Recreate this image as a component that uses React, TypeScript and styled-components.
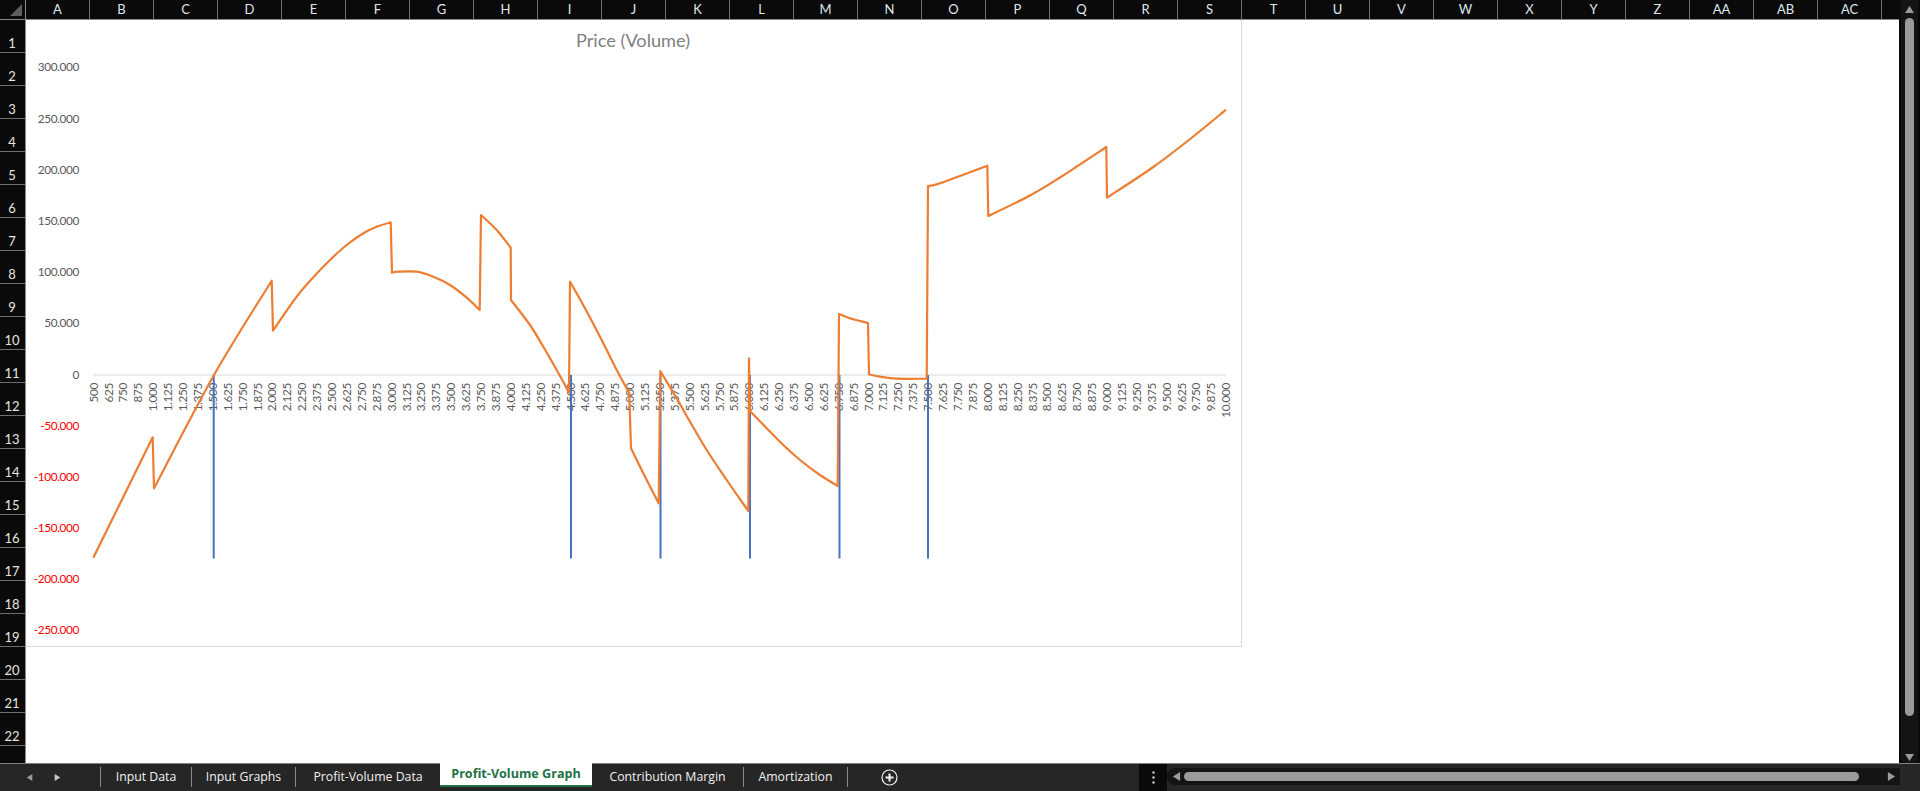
import React from "react";
import styled, { createGlobalStyle } from "styled-components";

const Global = createGlobalStyle`
  html, body { margin: 0; padding: 0; height: 100%; overflow: hidden; background: #0a0a0a; }
  #root { height: 100%; }
`;

const columnNames = ["A","B","C","D","E","F","G","H","I","J","K","L","M","N","O","P","Q","R","S","T","U","V","W","X","Y","Z","AA","AB","AC"];
const rowNames = Array.from({ length: 22 }, (_, i) => String(i + 1));

const Page = styled.div`
  width: 1920px;
  height: 791px;
  display: flex;
  flex-direction: column;
  overflow: hidden;
  font-family: Lato, "Liberation Sans", sans-serif;
`;
const SheetRow = styled.div`
  flex: 1;
  min-height: 0;
  display: flex;
`;
const Sheet = styled.div`
  width: 1899px;
  display: grid;
  grid-template-columns: 26px 1fr;
  grid-template-rows: 20px 1fr;
  background: #0a0a0a;
`;
const Corner = styled.div`
  border-right: 1px solid #8a8a8a;
  border-bottom: 1px solid #8a8a8a;
  display: flex;
  align-items: flex-start;
  justify-content: flex-end;
  padding: 4px 3px 0 0;
`;
const ColumnHeaders = styled.div`
  display: flex;
  border-bottom: 1px solid #8a8a8a;
`;
const ColumnHeader = styled.div`
  width: 64px;
  flex: none;
  box-sizing: border-box;
  border-right: 1px solid #6e6e6e;
  color: #dfe6ea;
  font-size: 13px;
  line-height: 19px;
  text-align: center;
`;
const RowHeaders = styled.div`
  display: flex;
  flex-direction: column;
  border-right: 1px solid #8a8a8a;
`;
const RowHeader = styled.div`
  height: 33px;
  flex: none;
  box-sizing: border-box;
  border-bottom: 1px solid #6e6e6e;
  color: #e6e6df;
  font-size: 13px;
  line-height: 17px;
  padding-top: 15px;
  text-align: center;
  padding-right: 1px;
`;
const Canvas = styled.div`
  background: #ffffff;
  min-width: 0;
`;
const ChartFrame = styled.div`
  width: 1216px;
  height: 627px;
  box-sizing: border-box;
  border-right: 1px solid #d9d9d9;
  border-bottom: 1px solid #d9d9d9;
`;
const ChartSvg = styled.svg`
  display: block;
  width: 1215px;
  height: 626px;
`;
const ChartTitle = styled.text`
  font-family: Lato, "Liberation Sans", sans-serif;
  font-size: 18.2px;
  fill: #7f7f7f;
  text-anchor: middle;
`;
const AxisLabel = styled.text<{ $negative?: boolean }>`
  font-family: Lato, "Liberation Sans", sans-serif;
  font-size: 11.8px;
  letter-spacing: -0.36px;
  fill: ${(p) => (p.$negative ? "#ff0000" : "#595959")};
  text-anchor: end;
`;

const VScroll = styled.div`
  width: 21px;
  box-sizing: border-box;
  padding: 0 2px 0 2px;
  background: #0a0a0a;
`;
const VTrack = styled.div`
  height: 765px;
  box-sizing: border-box;
  border-radius: 0 0 8px 8px;
  background: #141414;
  display: flex;
  flex-direction: column;
  align-items: center;
  padding-top: 5px;
`;
const VThumb = styled.div`
  width: 9px;
  height: 698px;
  margin: 4px 0 37px;
  border-radius: 5px;
  background: #9b9b9b;
`;

const BottomBar = styled.div`
  height: 28px;
  flex: none;
  box-sizing: border-box;
  border-top: 1px solid #7f7f7f;
  background: #262626;
  display: flex;
  align-items: stretch;
`;
const NavArea = styled.div`
  width: 100px;
  flex: none;
  box-sizing: border-box;
  display: flex;
  align-items: center;
  padding-left: 26px;
  gap: 21px;
`;
const TabStrip = styled.div`
  width: 1039px;
  flex: none;
  display: flex;
  align-items: flex-start;
`;
const Tab = styled.div<{ $width: number; $active?: boolean; $noSep?: boolean }>`
  width: ${(p) => p.$width}px;
  flex: none;
  box-sizing: border-box;
  font-family: "Open Sans", "Noto Sans", sans-serif;
  font-size: 12.3px;
  text-align: center;
  ${(p) =>
    p.$active
      ? `
    height: 24px;
    background: #ffffff;
    color: #217346;
    font-weight: 700;
    font-size: 12.6px;
    line-height: 21px;
    margin-top: -1px;
    border-bottom: 2px solid #217346;
  `
      : `
    height: 20px;
    margin-top: 3px;
    color: #f2f2f2;
    line-height: 19px;
    ${p.$noSep ? "" : "border-left: 1px solid #8a8a8a;"}
  `}
`;
const TabEnd = styled.div`
  width: 1px;
  height: 20px;
  margin-top: 3px;
  flex: none;
  background: #8a8a8a;
`;
const AddButton = styled.div`
  margin: 5px 0 0 33px;
  display: flex;
`;
const DotsBox = styled.div`
  width: 28px;
  flex: none;
  background: #0a0a0a;
  display: flex;
  align-items: center;
  justify-content: center;
`;
const HScrollArea = styled.div`
  flex: 1;
  display: flex;
  align-items: flex-start;
`;
const HTrack = styled.div`
  width: 733px;
  height: 17px;
  margin-top: 4px;
  box-sizing: border-box;
  border-radius: 8px 0 0 8px;
  background: #141414;
  display: flex;
  align-items: center;
  padding: 0 4px 0 5px;
`;
const HThumb = styled.div`
  width: 675px;
  height: 9px;
  margin: 0 28px 0 3px;
  border-radius: 5px;
  background: #9b9b9b;
`;

const values: [number, boolean][] = [
  [300, false], [250, false], [200, false], [150, false], [100, false], [50, false],
  [0, false], [-50, true], [-100, true], [-150, true], [-200, true], [-250, true],
];

const formatTick = (n: number) => {
  if (n < 1000) return String(n);
  const s = String(n);
  return s.slice(0, -3) + "." + s.slice(-3);
};
const ticks = Array.from({ length: 77 }, (_, i) => 500 + i * 125);
const tickX = (v: number) => 93.6 + (v - 500) * 0.11923;

const curve: [number, number][] = [
  [93.3,557.7],[152.7,437.3],[154,488.3],[214,375],[271.7,280.7],[273,330.7],
  [296.7,296.7],[313.3,277.3],[330,260],[346.7,245],[363.3,233.3],[376.7,226.7],[390.7,222.3],
  [392,272.7],[398.3,271.7],[416.7,271.7],[433.3,276.7],[450,285],[466.7,297.7],[479.7,310],
  [481,215],[496.7,230],[510.7,247.7],[511,300],[530,325],[543.3,346.7],[556.7,370],[569,392.5],
  [570,281.7],[585,308.3],[600,336.7],[615,366.7],[629.3,393.3],[631,448.3],[643.3,473.3],[658.7,503.3],
  [660.3,371],[676.7,398.3],[690,421.7],[706.7,450],[726.7,480],[748.3,511],
  [749,358.3],[750,411],[766.7,428.3],[783.3,445],[800,460],[820,475],[837.7,486],
  [839,314],[850,318.3],[868,323],[869,374.3],[880,376.7],[896.7,378.7],[926.7,378.7],
  [928,186],[940,183.3],[987.3,165.7],[988.3,216],[1030,195.5],[1060,177.5],[1106.3,147],
  [1107,197.7],[1153.3,167],[1193.3,136.5],[1226,109.7],
];
const markers = [213.7, 571, 660.5, 750, 839.5, 928];

/* Straight lines for the vertical jumps, Catmull-Rom curves between them. */
const buildCurvePath = (pts: [number, number][]) => {
  const isJump = (i: number) => pts[i + 1][0] - pts[i][0] <= 2.5;
  let d = `M${pts[0][0]} ${pts[0][1]}`;
  for (let i = 0; i < pts.length - 1; i++) {
    const p1 = pts[i];
    const p2 = pts[i + 1];
    if (isJump(i)) {
      d += `L${p2[0]} ${p2[1]}`;
      continue;
    }
    const p0 = i > 0 && !isJump(i - 1) ? pts[i - 1] : p1;
    const p3 = i < pts.length - 2 && !isJump(i + 1) ? pts[i + 2] : p2;
    const c1 = [p1[0] + (p2[0] - p0[0]) / 6, p1[1] + (p2[1] - p0[1]) / 6];
    const c2 = [p2[0] - (p3[0] - p1[0]) / 6, p2[1] - (p3[1] - p1[1]) / 6];
    d += `C${c1[0].toFixed(1)} ${c1[1].toFixed(1)} ${c2[0].toFixed(1)} ${c2[1].toFixed(1)} ${p2[0]} ${p2[1]}`;
  }
  return d;
};

const Triangle = ({ dir, size, color }: { dir: "up" | "down" | "left" | "right"; size: number; color: string }) => {
  const points = { up: "5,1 10,9 0,9", down: "0,1 10,1 5,9", left: "9,0 9,10 1,5", right: "1,0 1,10 9,5" }[dir];
  return (
    <svg width={size} height={size} viewBox="0 0 10 10" style={{ display: "block", flex: "none" }}>
      <polygon points={points} fill={color} />
    </svg>
  );
};

export default function App() {
  return (
    <Page>
      <Global />
      <SheetRow>
        <Sheet>
          <Corner>
            <svg width="12" height="12" viewBox="0 0 12 12" style={{ display: "block" }}>
              <polygon points="12,0 12,12 0,12" fill="#5e5e5e" />
            </svg>
          </Corner>
          <ColumnHeaders>
            {columnNames.map((c) => (
              <ColumnHeader key={c}>{c}</ColumnHeader>
            ))}
          </ColumnHeaders>
          <RowHeaders>
            {rowNames.map((r) => (
              <RowHeader key={r}>{r}</RowHeader>
            ))}
          </RowHeaders>
          <Canvas>
            <ChartFrame>
              <ChartSvg viewBox="26 20 1215 626">
                <ChartTitle x={633} y={47}>Price (Volume)</ChartTitle>
                {values.map(([v, neg]) => (
                  <AxisLabel key={v} x={79} y={375 - v * 1.0235 + 3.5} $negative={neg}>
                    {v === 0 ? "0" : `${v}.000`}
                  </AxisLabel>
                ))}
                <line x1={93} y1={375} x2={1226} y2={375} stroke="#d9d9d9" strokeWidth={1} />
                {ticks.map((t) => (
                  <AxisLabel key={t} transform={`translate(${tickX(t) + 4},383) rotate(-90)`}>
                    {formatTick(t)}
                  </AxisLabel>
                ))}
                {markers.map((x) => (
                  <line key={x} x1={x} y1={375} x2={x} y2={558.5} stroke="#4472c4" strokeWidth={2} />
                ))}
                <path
                  d={buildCurvePath(curve)}
                  fill="none"
                  stroke="#ed7d31"
                  strokeWidth={2.2}
                  strokeLinejoin="round"
                />
              </ChartSvg>
            </ChartFrame>
          </Canvas>
        </Sheet>
        <VScroll>
          <VTrack>
            <Triangle dir="up" size={9} color="#9b9b9b" />
            <VThumb />
            <Triangle dir="down" size={9} color="#9b9b9b" />
          </VTrack>
        </VScroll>
      </SheetRow>
      <BottomBar>
        <NavArea>
          <Triangle dir="left" size={7} color="#9a9a9a" />
          <Triangle dir="right" size={7} color="#c8c8c8" />
        </NavArea>
        <TabStrip>
          <Tab $width={91}>Input Data</Tab>
          <Tab $width={104}>Input Graphs</Tab>
          <Tab $width={145}>Profit-Volume Data</Tab>
          <Tab $width={152} $active>Profit-Volume Graph</Tab>
          <Tab $width={151} $noSep>Contribution Margin</Tab>
          <Tab $width={104}>Amortization</Tab>
          <TabEnd />
          <AddButton>
            <svg width="17" height="17" viewBox="0 0 17 17" style={{ display: "block" }}>
              <circle cx="8.5" cy="8.5" r="7.5" fill="none" stroke="#f2f2f2" strokeWidth="1.2" />
              <path d="M8.5 4.5v8M4.5 8.5h8" stroke="#f2f2f2" strokeWidth="2" />
            </svg>
          </AddButton>
        </TabStrip>
        <DotsBox>
          <svg width="3" height="13" viewBox="0 0 3 13" style={{ display: "block" }}>
            <rect x="0.5" y="0.5" width="2" height="2" fill="#f2f2f2" />
            <rect x="0.5" y="5.5" width="2" height="2" fill="#f2f2f2" />
            <rect x="0.5" y="10.5" width="2" height="2" fill="#f2f2f2" />
          </svg>
        </DotsBox>
        <HScrollArea>
          <HTrack>
            <Triangle dir="left" size={9} color="#9b9b9b" />
            <HThumb />
            <Triangle dir="right" size={9} color="#9b9b9b" />
          </HTrack>
        </HScrollArea>
      </BottomBar>
    </Page>
  );
}
